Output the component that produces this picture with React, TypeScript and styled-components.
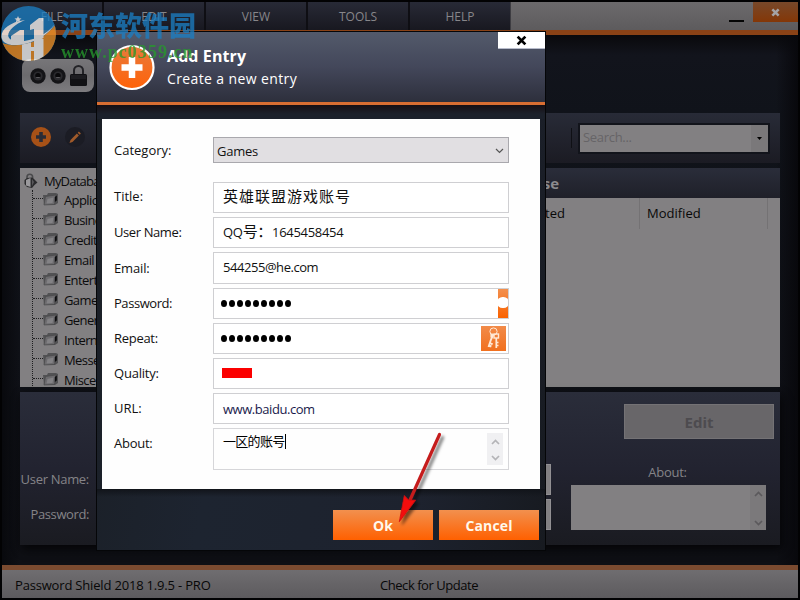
import React from "react";
import styled, { createGlobalStyle } from "styled-components";

const ui = `"Open Sans", "Noto Sans", "Noto Sans CJK SC", sans-serif`;

const Global = createGlobalStyle`
  * { box-sizing: border-box; }
  body { margin: 0; background: #000; font-family: ${ui}; }
  svg { display: block; flex: none; }
`;

const Window = styled.div`
  position: relative;
  width: 800px;
  height: 600px;
  overflow: hidden;
  padding: 2px;
  background: #020203;
  display: flex;
  flex-direction: column;
  font-size: 13px;
  white-space: nowrap;
`;

/* ---------- main window ---------- */

const TitleBar = styled.div`
  display: flex;
  height: 28px;
  flex: none;
  background: linear-gradient(#6c6a6c, #5d5b5d);
`;

const Menu = styled.nav`
  display: flex;
  width: 509px;
  border-right: 1px solid #3d3c41;
`;

const MenuItem = styled.div`
  width: 102px;
  border-right: 2px solid #0e0e13;
  background: linear-gradient(#282a36, #181820);
  color: #87868a;
  font-size: 12px;
  line-height: 29px;
  text-align: center;
  &:last-child { border-right: 0; width: 100px; }
`;

const WindowButtons = styled.div`
  display: flex;
  margin-left: auto;
`;

const Minimize = styled.div`
  width: 15px;
  height: 2px;
  margin: 18px 9px 0 0;
  background: #050505;
`;

const CloseMain = styled.div`
  width: 45px;
  height: 20px;
  display: flex;
  align-items: center;
  justify-content: center;
  background: linear-gradient(#77482a, #843707);
`;

const Rule = styled.div<{ $tone: string }>`
  height: 5px;
  flex: none;
  background: ${(p) => p.$tone};
`;

const Content = styled.div`
  height: 530px;
  flex: none;
  padding: 0 18px 20px;
  display: flex;
  flex-direction: column;
  background:
    linear-gradient(90deg, #08090d 0, transparent 18px, transparent 774px, #08080c 796px),
    linear-gradient(#09090c 0, #12141c 20px, #10131a 78px, #0e0f14 100%);
`;

const LogoRow = styled.div`
  height: 78px;
  flex: none;
  padding: 24px 0 0 2px;
`;

const LogoPlate = styled.div`
  width: 72px;
  height: 33px;
  border-radius: 8px;
  display: flex;
  align-items: center;
  gap: 4px;
  padding-left: 8px;
  background: linear-gradient(#777679, #6c6b6e 50%, #7d7c7f);
`;

const Toolbar = styled.div`
  height: 50px;
  flex: none;
  display: flex;
  align-items: center;
  padding: 0 10px 0 9px;
  gap: 10px;
  background: linear-gradient(#282b37, #1b1b23);
`;

const SearchGroup = styled.div`
  margin-left: auto;
  display: flex;
  align-items: center;
  gap: 6px;
`;

const Divider = styled.div`
  width: 1px;
  height: 20px;
  background: #0f1015;
`;

const Search = styled.div`
  width: 192px;
  height: 31px;
  border: 2px solid #12141b;
  background: #828082;
  display: flex;
  justify-content: space-between;
  color: #666467;
  line-height: 25px;
  letter-spacing: -0.3px;
  padding-left: 3px;
`;

const SearchDrop = styled.div`
  width: 17px;
  display: flex;
  align-items: center;
  justify-content: center;
  background: #7a787a;
`;

const Middle = styled.div`
  display: flex;
  height: 219px;
  margin: 5px 0;
  flex: none;
`;

const Tree = styled.div`
  width: 190px;
  padding-top: 3px;
  overflow: hidden;
  background: #828082;
  color: #0b0b0c;
`;

const TreeRoot = styled.div`
  height: 19px;
  display: flex;
  align-items: center;
  gap: 6px;
  padding-left: 4px;
  letter-spacing: -0.8px;
`;

const TreeBranch = styled.div`
  margin-left: 12px;
  border-left: 1px dotted #1d1d1f;
`;

const TreeItem = styled.div`
  height: 20px;
  display: flex;
  align-items: center;
  letter-spacing: -0.6px;
`;

const Twig = styled.div`
  width: 10px;
  height: 1px;
  border-top: 1px dotted #1d1d1f;
  margin-top: -4px;
`;

const TreeFolder = styled.div`
  margin-top: -2px;
`;

const TreeName = styled.span`
  margin: 0 0 0 6px;
`;

const Grid = styled.div`
  flex: 1;
  margin-left: 5px;
  background: #828082;
`;

const GridTitle = styled.div`
  width: 344px;
  text-align: right;
`;

const GridBar = styled.div`
  height: 30px;
  background: linear-gradient(#2a2d3a, #1f2029);
  color: #8c8b8e;
  font-size: 15px;
  font-weight: 700;
  line-height: 30px;
`;

const GridHead = styled.div`
  display: flex;
  height: 31px;
  line-height: 31px;
  color: #080808;
`;

const GridColumn = styled.div<{ $width: number; $pad: number }>`
  width: ${(p) => p.$width}px;
  padding-left: ${(p) => p.$pad}px;
  border-right: 1px solid #747274;
`;

const Details = styled.div`
  height: 153px;
  flex: none;
  display: flex;
  justify-content: space-between;
  background: linear-gradient(#2a2d3a, #222330 50%, #1a1b21);
  box-shadow: 2px 4px 9px #050507;
`;

const DetailFields = styled.div`
  width: 531px;
  padding-top: 72px;
  display: grid;
  grid-template-columns: 69px 1fr;
  grid-auto-rows: 31px;
  row-gap: 4px;
  column-gap: 11px;
  color: #858488;
`;

const DetailLabel = styled.div<{ $track: number }>`
  text-align: right;
  line-height: 31px;
  letter-spacing: ${(p) => p.$track}px;
`;

const DetailInput = styled.div`
  background: #828082;
  border: 1px solid #929093;
`;

const DetailAside = styled.div`
  width: 209px;
  padding: 12px 0 0;
`;

const EditButton = styled.div`
  width: 150px;
  height: 35px;
  margin-left: 53px;
  background: #686669;
  border: 1px solid #747275;
  color: #4d4b4f;
  text-align: center;
  font-size: 15px;
  font-weight: 700;
  line-height: 35px;
`;

const AboutLabel = styled.div`
  width: 193px;
  height: 46px;
  padding-top: 23px;
  color: #858488;
  text-align: center;
  line-height: 20px;
  letter-spacing: -0.25px;
`;

const AboutBox = styled.div`
  width: 195px;
  height: 45px;
  display: flex;
  justify-content: flex-end;
  background: #828082;
`;

const ScrollTrack = styled.div<{ $dim?: boolean }>`
  width: 16px;
  display: flex;
  flex-direction: column;
  align-items: center;
  justify-content: space-between;
  padding: 6px 0 4px;
  background: ${(p) => (p.$dim ? "#7b797b" : "#f0f0f2")};
`;

const StatusBar = styled.div`
  height: 28px;
  flex: none;
  display: flex;
  padding-left: 13px;
  background: linear-gradient(#6f6d70, #5d5b5e);
  color: #080808;
  line-height: 31px;
`;

const StatusText = styled.div<{ $width?: number; $track: number }>`
  width: ${(p) => (p.$width ? `${p.$width}px` : "auto")};
  letter-spacing: ${(p) => p.$track}px;
`;

/* ---------- dialog ---------- */

const Dialog = styled.section`
  position: absolute;
  left: 96px;
  top: 31px;
  width: 450px;
  height: 520px;
  border: 1px solid #050608;
  display: flex;
  flex-direction: column;
  background: linear-gradient(100deg, #1a1e24, #1d2430 35%, #1d222e 75%, #171a20);
`;

const DialogHeader = styled.header`
  height: 73px;
  flex: none;
  display: flex;
  border-bottom: 3px solid #d96e32;
  background: linear-gradient(#535a6b, #43475a 50%, #2d2f3c);
  padding-left: 12px;
  color: #fff;
`;

const Heading = styled.div`
  margin: 13px auto 0 12px;
`;

const Title = styled.h1`
  margin: 0;
  font-size: 16px;
  line-height: 23px;
  font-weight: 700;
  letter-spacing: 0.1px;
`;

const Subtitle = styled.p`
  margin: 0;
  font-size: 14px;
  line-height: 22px;
  letter-spacing: 0.38px;
`;

const CloseDialog = styled.div`
  width: 47px;
  height: 17px;
  display: flex;
  align-items: center;
  justify-content: center;
  background: #fff;
  border-bottom: 1px solid #b8bccb;
`;

const HeaderShade = styled.div`
  height: 14px;
  flex: none;
  background: linear-gradient(#170f14, #1c212b 9px);
`;

const Form = styled.div`
  height: 370px;
  flex: none;
  margin: 0 5px;
  padding: 18px 31px 0 12px;
  background: #fefefe;
  color: #111;
`;

const FormRow = styled.div<{ $height?: number; $gap?: number }>`
  display: grid;
  grid-template-columns: 99px 296px;
  height: ${(p) => p.$height ?? 31}px;
  margin-bottom: ${(p) => p.$gap ?? 4}px;
`;

const FormLabel = styled.label<{ $line?: number; $track?: number }>`
  line-height: ${(p) => p.$line ?? 30}px;
  letter-spacing: ${(p) => p.$track ?? 0}px;
`;

const Select = styled.div`
  display: flex;
  align-items: center;
  justify-content: space-between;
  padding: 1px 3px 0 2px;
  background: #e1dfe2;
  border: 1px solid #a9a8ad;
`;

const Field = styled.div<{ $flush?: boolean; $lift?: number }>`
  display: flex;
  align-items: center;
  justify-content: space-between;
  padding: 0 ${(p) => (p.$flush ? 0 : 2)}px ${(p) => p.$lift ?? 0}px 8px;
  border: 1px solid #cfcfd2;
  background: #fff;
`;

const Value = styled.span<{ $track?: number; $color?: string; $size?: number }>`
  padding-left: 1px;
  color: ${(p) => p.$color ?? "#111"};
  font-size: ${(p) => p.$size ?? 13}px;
  letter-spacing: ${(p) => p.$track ?? 0}px;
`;

const WideText = styled.span`
  font-size: 15px;
  line-height: 15px;
`;

const Mask = styled.div`
  display: flex;
  gap: 2px;
  margin-left: -1px;
`;

const MaskDot = styled.i`
  width: 6px;
  height: 7px;
  border-radius: 50%;
  background: #000;
`;

const Generator = styled.div`
  width: 10px;
  height: 29px;
  overflow: hidden;
  display: flex;
  align-items: center;
  justify-content: center;
  background: linear-gradient(#f3904e, #fa6200);
`;

const GeneratorKnob = styled.div`
  flex: none;
  width: 12px;
  height: 11px;
  margin-top: -3px;
  border-radius: 6px;
  background: #fff;
`;

const KeyButton = styled.div`
  width: 25px;
  height: 25px;
  background: linear-gradient(#f28b49, #f1701f);
`;

const Meter = styled.div`
  width: 30px;
  height: 10px;
  margin: -1px 0 0 0;
  background: #fb0000;
`;

const Memo = styled.div`
  display: flex;
  justify-content: space-between;
  padding: 4px 5px 4px 9px;
  border: 1px solid #d6d6d9;
`;

const MemoText = styled.div`
  height: 15px;
  margin-top: 1px;
  border-right: 1px solid #000;
  font-family: "Noto Sans CJK SC", sans-serif;
  font-size: 13px;
  line-height: 14px;
  letter-spacing: -0.7px;
  color: #000;
`;

const Actions = styled.footer`
  display: flex;
  flex: 1;
  justify-content: flex-end;
  gap: 6px;
  padding: 21px 6px 0;
  background: linear-gradient(#11141a, transparent 8px);
`;

const ActionButton = styled.div`
  width: 100px;
  height: 30px;
  background: linear-gradient(#f2904e, #ff6000);
  color: #fff8ec;
  text-align: center;
  font-size: 14px;
  font-weight: 700;
  line-height: 31px;
  letter-spacing: 0.15px;
`;

/* ---------- overlays ---------- */

const Watermark = styled.div`
  position: absolute;
  left: 0;
  top: 5px;
  display: flex;
  opacity: 0.76;
`;

const MarkText = styled.div`
  margin: 2px 0 0 4px;
`;

const MarkName = styled.div`
  font-family: "Noto Sans CJK SC", sans-serif;
  font-weight: 900;
  font-size: 27px;
  line-height: 35px;
  color: #1b7fc4;
`;

const MarkUrl = styled.div`
  font-family: "Liberation Serif", serif;
  font-weight: 700;
  font-size: 18px;
  line-height: 20px;
  letter-spacing: 1.05px;
  color: #269a2c;
`;

const PointerLayer = styled.div`
  position: absolute;
  left: 390px;
  top: 425px;
`;

const Cross = ({ color, size, weight }: { color: string; size: number; weight: number }) => (
  <svg width={size} height={size} viewBox="0 0 10 10">
    <path d="M1.5 1.5 8.5 8.5M8.5 1.5 1.5 8.5" stroke={color} strokeWidth={weight} />
  </svg>
);

const Chevron = ({ up, color, width = 9, weight = 1.7 }: { up?: boolean; color: string; width?: number; weight?: number }) => (
  <svg width={width} height="6" viewBox="0 0 9 6">
    <path d={up ? "M1 5 4.5 1.5 8 5" : "M1 1 4.5 4.5 8 1"} fill="none" stroke={color} strokeWidth={weight} />
  </svg>
);

const Dial = () => (
  <svg width="16" height="16" viewBox="0 0 16 16">
    <circle cx="8" cy="8" r="7.7" fill="#141417" />
    <circle cx="8" cy="8" r="4.6" fill="#2a2a2e" />
    <circle cx="8" cy="7.6" r="2.7" fill="#08080a" />
    <path d="M5.6 9a2.600 2.200 0 0 0 4.800 0z" fill="#59585c" />
  </svg>
);

const Padlock = () => (
  <svg width="17" height="21" viewBox="0 0 17 21">
    <path d="M4 10V5.5a4.5 4.5 0 0 1 9 0V10" fill="none" stroke="#232327" strokeWidth="2" />
    <rect x="0" y="9" width="17" height="12" rx="1.5" fill="#111114" />
    <rect x="1" y="10" width="15" height="4" fill="#1d1d21" />
  </svg>
);

const AddIcon = () => (
  <svg width="24" height="24" viewBox="0 0 24 24">
    <circle cx="12" cy="11" r="10" fill="#a65117" />
    <path d="M12 6v10M7 11h10" stroke="#2a2c36" strokeWidth="3.6" />
  </svg>
);

const PencilIcon = () => (
  <svg width="24" height="24" viewBox="0 0 24 24">
    <circle cx="12" cy="11" r="10" fill="#1b1c24" />
    <path d="M6.5 17l1-3 6.4-6.4 2 2L9.5 16z" fill="#a05a2a" />
    <path d="M14.7 6.8l2 2 1.2-1.2-2-2z" fill="#a05a2a" />
  </svg>
);

const DatabaseIcon = () => (
  <svg width="14" height="16" viewBox="0 0 14 16">
    <path d="M3 7V4a2.800 2.800 0 0 1 5.600 0v3" fill="none" stroke="#4a4a4c" strokeWidth="1.6" />
    <path d="M.5 7 3 5l5-.5 2 1.5 3.5 3.5-3 2.5-2.5 3-5-1L.5 11z" fill="#2b2b2d" />
    <path d="M2 7 6.5 5v9L2 12.5z" fill="#9a999c" />
    <path d="M8 6v7l2-4z" fill="#59585b" />
  </svg>
);

const FolderIcon = () => (
  <svg width="15" height="14" viewBox="0 0 15 14">
    <path d="M0 3h4l1-2h8l2 1v9l-3 2H1z" fill="#525254" />
    <path d="M1 13 2.5 4.5 13 3l-1.500 9.500z" fill="#6c6b6e" stroke="#444446" strokeWidth=".6" />
    <path d="M3.500 11.500 4.500 7l6-1.500-1 5.500z" fill="#838285" />
    <path d="M11.800 5l2-1.500v5l-2 1.500z" fill="#0d0d0f" />
  </svg>
);

const PlusBadge = () => (
  <svg width="46" height="70" viewBox="0 0 46 70">
    <defs>
      <linearGradient id="badge" x1="0" x2="0" y1="0" y2="1">
        <stop offset="0" stopColor="#e87a3c" />
        <stop offset="1" stopColor="#ff6208" />
      </linearGradient>
    </defs>
    <circle cx="23" cy="35.5" r="21.5" fill="url(#badge)" stroke="#fff" strokeWidth="2.2" />
    <path d="M23 25v21M12.5 35.5h21" stroke="#fff" strokeWidth="6.5" />
  </svg>
);

const KeysIcon = () => (
  <svg width="25" height="25" viewBox="0 0 25 25" fill="none" stroke="#ffe9d6">
    <circle cx="12.5" cy="5.5" r="3.6" strokeWidth="1" />
    <rect x="13" y="8" width="4.5" height="4" strokeWidth="1.4" />
    <path d="M15.3 12v10M15.5 16.5h2M15.5 19.5h2" strokeWidth="1.7" />
    <path d="M12.5 8 10 13.5 7.5 21M9 17l2.6 1.4M8 19.5l2.4 1" strokeWidth="1.9" />
    <path d="M10.5 7.5v4" strokeWidth="2.2" />
  </svg>
);

const MarkLogo = () => (
  <svg width="57" height="57" viewBox="0 0 57 57">
    <defs>
      <clipPath id="disc"><circle cx="28.5" cy="28.5" r="27.5" /></clipPath>
      <clipPath id="lower"><path d="M0 36C18 45 42 38 57 18v39H0z" /></clipPath>
    </defs>
    <g clipPath="url(#disc)">
      <rect width="57" height="57" fill="#1b7fc4" />
      <path d="M0 37C18 45 42 38 57 18v39H0z" fill="#f2942a" />
      <path d="M11 31 20 25h4v14l-13 1z" fill="#fff" />
      <path d="M30 20 39 13h4.5v20L34 38V24l-4 1z" fill="#fff" />
      <path d="M22 36h9v21h-9zM34 34h9.5v23H34zM30 42h5v4h-5z" fill="#fff" clipPath="url(#lower)" />
    </g>
    <path
      d="M25 15C8 17-1 27 2 34c4 12 40 6 53-15C46 31 28 38 15 36 2 33 9 22 25 15z"
      fill="#fff"
    />
    <path d="M18 11l1 2.3 2.500.2-1.9 1.6.6 2.4-2.2-1.300-2.2 1.300.6-2.400-1.9-1.600 2.500-.2z" fill="#fff" />
  </svg>
);

const PointerArrow = () => (
  <svg width="60" height="110" viewBox="0 0 60 110">
    <defs>
      <filter id="pointer-shadow" x="-40%" y="-20%" width="190%" height="150%">
        <feDropShadow dx="3" dy="3" stdDeviation="1.6" floodColor="#000" floodOpacity=".5" />
      </filter>
    </defs>
    <g filter="url(#pointer-shadow)">
      <path d="M49.5 9.5 20 75" stroke="#c51c1d" strokeWidth="3.2" strokeLinecap="round" />
      <path d="M9.3 96.7 14.3 70.5 18.5 75 25.5 75.3z" fill="#f30d0d" stroke="#d01010" strokeWidth=".8" />
    </g>
  </svg>
);

const folders = [
  "Applications", "Business", "Credit Cards", "Email", "Entertainment",
  "Games", "General", "Internet", "Messenger", "Miscellaneous",
];

const Dots = () => (
  <Mask>
    {Array.from({ length: 9 }, (_, i) => <MaskDot key={i} />)}
  </Mask>
);

export default function App() {
  return (
    <>
      <Global />
      <Window>
        <TitleBar>
          <Menu>
            {["FILE", "EDIT", "VIEW", "TOOLS", "HELP"].map((m) => <MenuItem key={m}>{m}</MenuItem>)}
          </Menu>
          <WindowButtons>
            <Minimize />
            <CloseMain><Cross color="#a5a3a5" size={9} weight={2.8} /></CloseMain>
          </WindowButtons>
        </TitleBar>
        <Rule $tone="#8a4216" />
        <Content>
          <LogoRow>
            <LogoPlate><Dial /><Dial /><Padlock /></LogoPlate>
          </LogoRow>
          <Toolbar>
            <AddIcon />
            <PencilIcon />
            <SearchGroup>
              <Divider />
              <Search>Search...
                <SearchDrop>
                  <svg width="5" height="3" viewBox="0 0 5 3"><path d="M0 0h5L2.5 3z" fill="#000" /></svg>
                </SearchDrop>
              </Search>
            </SearchGroup>
          </Toolbar>
          <Middle>
            <Tree>
              <TreeRoot><DatabaseIcon />MyDatabase</TreeRoot>
              <TreeBranch>
                {folders.map((f) => (
                  <TreeItem key={f}>
                    <Twig /><TreeFolder><FolderIcon /></TreeFolder><TreeName>{f}</TreeName>
                  </TreeItem>
                ))}
              </TreeBranch>
            </Tree>
            <Grid>
              <GridBar><GridTitle>MyDatabase</GridTitle></GridBar>
              <GridHead>
                <GridColumn $width={425} $pad={302}>Created</GridColumn>
                <GridColumn $width={128} $pad={7}>Modified</GridColumn>
              </GridHead>
            </Grid>
          </Middle>
          <Details>
            <DetailFields>
              <DetailLabel $track={-0.3}>User Name:</DetailLabel><DetailInput />
              <DetailLabel $track={-0.4}>Password:</DetailLabel><DetailInput />
            </DetailFields>
            <DetailAside>
              <EditButton>Edit</EditButton>
              <AboutLabel>About:</AboutLabel>
              <AboutBox>
                <ScrollTrack $dim><Chevron up color="#5b595c" /><Chevron color="#5b595c" /></ScrollTrack>
              </AboutBox>
            </DetailAside>
          </Details>
        </Content>
        <Rule $tone="#7b4b30" />
        <StatusBar>
          <StatusText $width={365} $track={-0.18}>Password Shield 2018 1.9.5 - PRO</StatusText>
          <StatusText $track={-0.45}>Check for Update</StatusText>
        </StatusBar>

        <Dialog>
          <DialogHeader>
            <PlusBadge />
            <Heading>
              <Title>Add Entry</Title>
              <Subtitle>Create a new entry</Subtitle>
            </Heading>
            <CloseDialog><Cross color="#000" size={11} weight={2.5} /></CloseDialog>
          </DialogHeader>
          <HeaderShade />
          <Form>
            <FormRow $height={26} $gap={19}>
              <FormLabel $line={26}>Category:</FormLabel>
              <Select><Value $track={-0.25}>Games</Value><Chevron color="#555" width={11} weight={1.2} /></Select>
            </FormRow>
            <FormRow>
              <FormLabel $line={28}>Title:</FormLabel>
              <Field $lift={5}><Value $size={15} $track={1}>英雄联盟游戏账号</Value></Field>
            </FormRow>
            <FormRow>
              <FormLabel $track={-0.4}>User Name:</FormLabel>
              <Field $lift={1}><Value $track={-0.3}>QQ<WideText>号：</WideText>1645458454</Value></Field>
            </FormRow>
            <FormRow $gap={5}>
              <FormLabel $line={32} $track={-0.15}>Email:</FormLabel>
              <Field $lift={2}><Value $track={-0.45}>544255@he.com</Value></Field>
            </FormRow>
            <FormRow>
              <FormLabel $track={-0.45}>Password:</FormLabel>
              <Field $flush><Dots /><Generator><GeneratorKnob /></Generator></Field>
            </FormRow>
            <FormRow>
              <FormLabel $track={-0.3}>Repeat:</FormLabel>
              <Field><Dots /><KeyButton><KeysIcon /></KeyButton></Field>
            </FormRow>
            <FormRow>
              <FormLabel $track={-0.2}>Quality:</FormLabel>
              <Field><Meter /></Field>
            </FormRow>
            <FormRow>
              <FormLabel>URL:</FormLabel>
              <Field><Value $color="#1a1a4c" $track={-0.45}>www.baidu.com</Value></Field>
            </FormRow>
            <FormRow $height={42} $gap={0}>
              <FormLabel $track={-0.25}>About:</FormLabel>
              <Memo>
                <MemoText>一区的账号</MemoText>
                <ScrollTrack><Chevron up color="#b4b4b7" /><Chevron color="#b4b4b7" /></ScrollTrack>
              </Memo>
            </FormRow>
          </Form>
          <Actions>
            <ActionButton>Ok</ActionButton>
            <ActionButton>Cancel</ActionButton>
          </Actions>
        </Dialog>

        <PointerLayer><PointerArrow /></PointerLayer>
        <Watermark>
          <MarkLogo />
          <MarkText>
            <MarkName>河东软件园</MarkName>
            <MarkUrl>www.pc0359.cn</MarkUrl>
          </MarkText>
        </Watermark>
      </Window>
    </>
  );
}
